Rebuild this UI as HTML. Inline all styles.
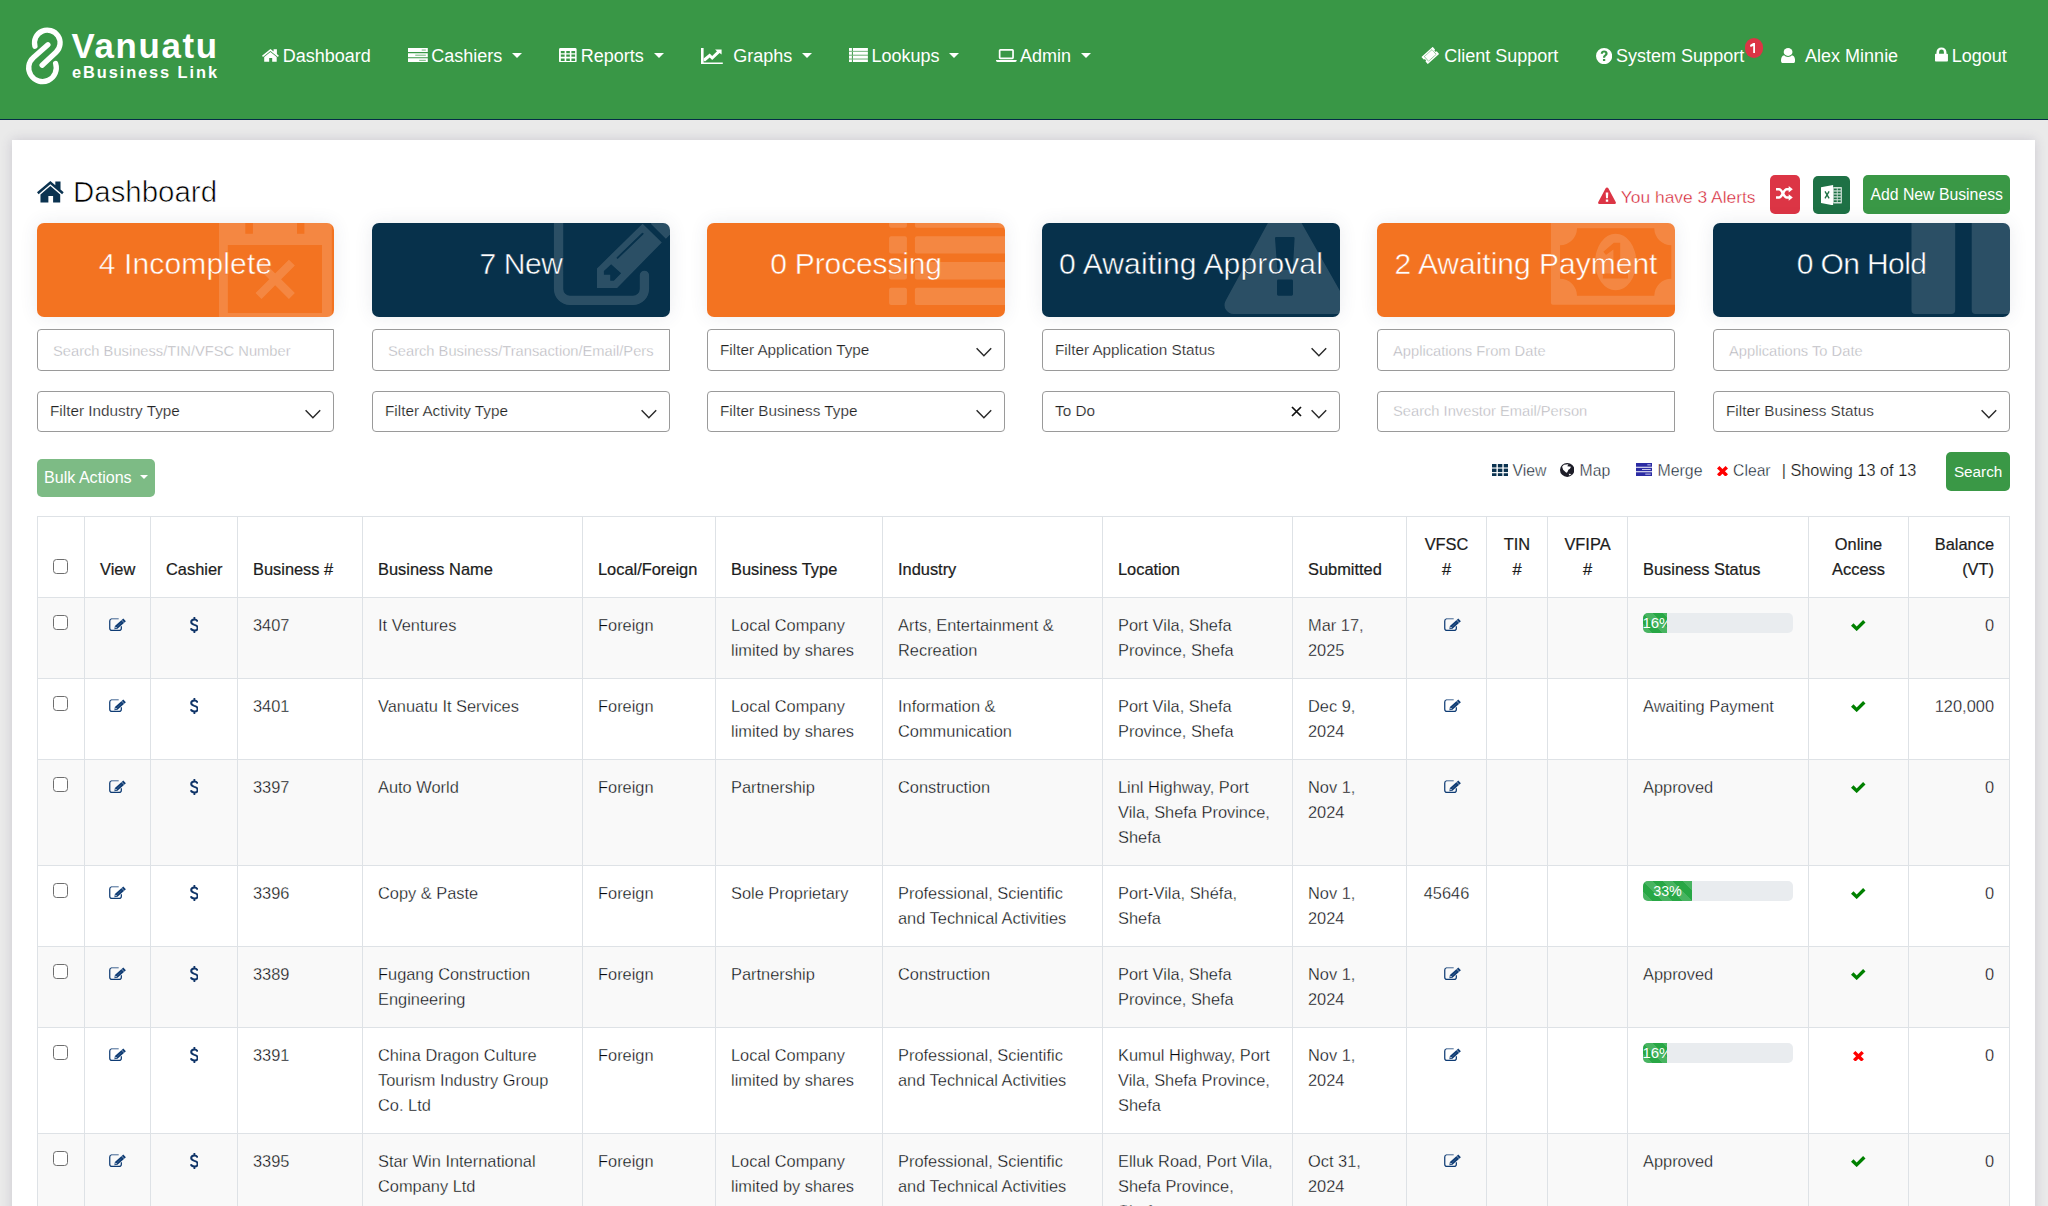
<!DOCTYPE html>
<html>
<head>
<meta charset="utf-8">
<title>Dashboard</title>
<style>
*{box-sizing:border-box;}
html,body{margin:0;padding:0;}
body{width:2048px;height:1206px;overflow:hidden;background:#eaeaea;font-family:"Liberation Sans",sans-serif;font-size:16.4px;line-height:25px;color:#333;position:relative;}
.abs{position:absolute;}
#nav{position:absolute;left:0;top:0;width:2048px;height:120px;background:#399746;border-bottom:1px solid #062c47;}
#nav .it{position:absolute;top:44.2px;height:25px;line-height:25px;font-size:18px;color:#fff;white-space:nowrap;}
.caret{position:absolute;width:0;height:0;border-left:5px solid transparent;border-right:5px solid transparent;border-top:5.2px solid #fff;top:52.9px;}
#main{position:absolute;left:12px;top:140px;width:2023px;height:1100px;background:#fff;box-shadow:0 0 11px rgba(70,60,100,.19);}
h1{position:absolute;left:73px;top:172px;margin:0;font-weight:normal;font-size:29.45px;line-height:40px;color:#000;white-space:nowrap;-webkit-text-stroke:0.65px #fff;}
.card{position:absolute;top:223px;width:298px;height:94px;border-radius:7px;overflow:hidden;box-shadow:0 0 18px rgba(60,70,100,.10);color:#fff;font-size:30px;line-height:94px;text-align:center;white-space:nowrap;}
.card span{position:absolute;left:0;top:-6px;width:100%;text-align:center;}
.or{background:#f37321;-webkit-text-stroke:0.48px #f37321;}
.nv{background:#07314b;-webkit-text-stroke:0.48px #07314b;}
.inp{position:absolute;width:298px;height:41px;border:1px solid #9a9a9a;border-radius:4px;background:#fff;font-size:14.7px;line-height:39px;padding-left:15px;color:#b4b4ba;-webkit-text-stroke:.35px #fff;white-space:nowrap;overflow:hidden;}
.sel{-webkit-text-stroke:.22px #fff;color:#222;padding-left:12px;font-size:15.3px;}
.chev{position:absolute;right:12px;top:16.5px;width:16px;height:10px;}
.btn{position:absolute;border-radius:5px;color:#fff;text-align:center;white-space:nowrap;}
.tl{position:absolute;top:458px;font-size:16.5px;line-height:25px;color:#333;white-space:nowrap;}
table{position:absolute;left:37px;top:516px;width:1972px;border-collapse:collapse;table-layout:fixed;}
td,th{border:1px solid #dee2e6;padding:15px;vertical-align:top;text-align:left;font-weight:normal;white-space:nowrap;overflow:hidden;}
th{vertical-align:bottom;color:#1c1c1c;-webkit-text-stroke:.22px #1c1c1c;}
td{color:#05080b;-webkit-text-stroke:0.32px #fff;}
tr.s td{-webkit-text-stroke-color:#f9f9f9;}
tr.s td{background:#f9f9f9;}
th.c,td.c{text-align:center;}
th.r,td.r{text-align:right;}
.dl{font-weight:bold;color:#0f3468;font-size:18.4px;}
.dl span{display:inline-block;transform:scale(.84,1);position:relative;top:-2px;}
.cb{display:block;width:15px;height:15px;border:1.4px solid #6e6e6e;border-radius:3.5px;background:#fff;margin:2px 0 0 0;}
th .cb{margin:0 0 8px 0;}
.prog{width:150px;height:20px;background:#e9ecef;border-radius:5px;overflow:hidden;margin-top:0;}
.prog div{-webkit-text-stroke:0;height:20px;background-color:#28a745;background-image:linear-gradient(45deg,rgba(255,255,255,.15) 25%,transparent 25%,transparent 50%,rgba(255,255,255,.15) 50%,rgba(255,255,255,.15) 75%,transparent 75%,transparent);background-size:20px 20px;color:#fff;font-size:14px;line-height:20px;text-align:center;overflow:hidden;}
td svg{display:inline-block;vertical-align:top;}
td.vf svg{margin-left:12px !important;}
</style>
</head>
<body>
<div id="nav">
<svg class="abs" style="left:20px;top:20px" width="210" height="75" viewBox="20 20 210 75"><g fill="none" stroke="#fff" stroke-width="5.3" stroke-linecap="round"><path d="M34.93 46.25 A12.8 12.8 0 1 1 56.02 52.30 L42.1 65.3"/><path d="M55.62 63.54 A13.8 13.8 0 1 1 33.45 57.38 L47.9 44.7"/></g><text x="71.5" y="58" font-family="Liberation Sans, sans-serif" font-weight="bold" font-size="34.8" fill="#fff" textLength="145.5" lengthAdjust="spacing">Vanuatu</text><text x="72" y="77.6" font-family="Liberation Sans, sans-serif" font-weight="bold" font-size="16.4" fill="#fff" textLength="145" lengthAdjust="spacing">eBusiness Link</text></svg>
<svg class="abs" style="left:262px;top:49.2px" width="16.9" height="12.8" viewBox="0 0 16.9 12.8" fill="#fff" preserveAspectRatio="none" ><path d="M8.45 0 L0 6.7 L1.0 7.9 L8.45 1.9 L15.9 7.9 L16.9 6.7 L14.9 5.1 V0.3 H11.6 V2.5 Z"/><path d="M8.45 3.0 L2.2 8.0 V12.8 H7.2 V9 H10.2 V12.8 H14.7 V8.0 Z"/></svg><div class="it" style="left:282.7px">Dashboard</div>
<svg class="abs" style="left:408.2px;top:47.6px" width="19.8" height="14.4" viewBox="0 0 26 20" fill="#fff" preserveAspectRatio="none" ><path d="M0 0H26V5.7H0Z M0 7.15H26V12.85H0Z M0 14.3H26V20H0Z"/><g fill="#7dbd86"><rect x="18" y="2.1" width="5.4" height="1.5"/><rect x="9.5" y="9.25" width="13.9" height="1.5"/><rect x="14.7" y="16.4" width="8.7" height="1.5"/></g></svg><div class="it" style="left:431.2px">Cashiers</div><div class="caret" style="left:511.9px"></div>
<svg class="abs" style="left:559.3px;top:47.6px" width="17.6" height="14.4" viewBox="0 0 24 20" fill="#fff" preserveAspectRatio="none" ><path fill-rule="evenodd" d="M2 0H22A2 2 0 0 1 24 2V18A2 2 0 0 1 22 20H2A2 2 0 0 1 0 18V2A2 2 0 0 1 2 0Z M2.5 4.3V7.4H7.7V4.3Z M9.9 4.3V7.4H14.8V4.3Z M16.9 4.3V7.4H22V4.3Z M2.5 9.1V12.2H7.7V9.1Z M9.9 9.1V12.2H14.8V9.1Z M16.9 9.1V12.2H22V9.1Z M2.5 14.5V17.9H7.7V14.5Z M9.9 14.5V17.9H14.8V14.5Z M16.9 14.5V17.9H22V14.5Z"/></svg><div class="it" style="left:580.7px">Reports</div><div class="caret" style="left:653.9px"></div>
<svg class="abs" style="left:701.1px;top:47.5px" width="21.8" height="16.1" viewBox="0 0 21.8 16.1" fill="#fff" preserveAspectRatio="none" ><path d="M0 0H2.6V14.4H21.8V16.1H0Z"/><path d="M2.6 10.4 L8.7 5.4 L11.2 7.9 L16.0 3.3 L14.05 1.6 H20.6 V6.6 L18.6 4.9 L11.2 12.1 L8.7 9.5 L4.0 13.6 L2.6 12.4 Z"/></svg><div class="it" style="left:733.2px">Graphs</div><div class="caret" style="left:801.9px"></div>
<svg class="abs" style="left:849.1px;top:47.6px" width="18.9" height="14.4" viewBox="0 0 18.9 14.4" fill="#fff" preserveAspectRatio="none" ><rect x="0" y="0" width="2.9" height="2.9"/><rect x="3.9" y="0" width="15" height="2.9"/><rect x="0" y="2.9" width="18.9" height="0.95" opacity=".35"/><rect x="0" y="3.85" width="2.9" height="2.9"/><rect x="3.9" y="3.85" width="15" height="2.9"/><rect x="0" y="6.75" width="18.9" height="0.95" opacity=".35"/><rect x="0" y="7.7" width="2.9" height="2.9"/><rect x="3.9" y="7.7" width="15" height="2.9"/><rect x="0" y="10.6" width="18.9" height="0.95" opacity=".35"/><rect x="0" y="11.5" width="2.9" height="2.9"/><rect x="3.9" y="11.5" width="15" height="2.9"/><rect x="0" y="14.4" width="18.9" height="0.95" opacity=".35"/></svg><div class="it" style="left:871.4px">Lookups</div><div class="caret" style="left:949.2px"></div>
<svg class="abs" style="left:996.3px;top:49px" width="20.7" height="13" viewBox="0 0 20.7 13" fill="#fff" preserveAspectRatio="none" ><path fill-rule="evenodd" d="M4.4 0H16.3A1.6 1.6 0 0 1 17.9 1.6V8.6A1.6 1.6 0 0 1 16.3 10.2H4.4A1.6 1.6 0 0 1 2.8 8.6V1.6A1.6 1.6 0 0 1 4.4 0Z M4.5 1.7V8.5H16.2V1.7Z"/><path d="M0 11H20.7V11.6A1.4 1.4 0 0 1 19.3 13H1.4A1.4 1.4 0 0 1 0 11.6Z"/></svg><div class="it" style="left:1020px">Admin</div><div class="caret" style="left:1081px"></div>
<svg class="abs" style="left:1421.1px;top:47.1px" width="18.5" height="16.9" viewBox="0 0 18.5 16.9" fill="#fff" preserveAspectRatio="none" ><g transform="rotate(-42 9.25 8.45)"><path d="M1.65 3.7H16.85V7.15A1.3 1.3 0 0 0 16.85 9.75V13.2H1.65V9.75A1.3 1.3 0 0 0 1.65 7.15Z"/><rect x="4.1" y="5.3" width="10.3" height="6.3" fill="none" stroke="#3a9846" stroke-width=".7" stroke-dasharray="1 .5"/></g></svg><div class="it" style="left:1444.2px">Client Support</div>
<svg class="abs" style="left:1595.8px;top:47.9px" width="16.2" height="16.2" viewBox="0 0 24 24" fill="#fff" preserveAspectRatio="none" ><path fill-rule="evenodd" d="M12 0A12 12 0 1 1 12 24A12 12 0 1 1 12 0Z M10.3 16.2V19.2H13.7V16.2Z M7 8.6H10.2C10.2 7.4 11 6.7 12 6.7C13.1 6.7 13.8 7.3 13.8 8.2C13.8 9.1 13.3 9.6 12.4 10.3C11 11.3 10.4 12.3 10.4 14V14.6H13.6V14.2C13.6 13.2 14 12.7 15 12C16.4 11 17.2 9.9 17.2 8.1C17.2 5.5 15.1 3.8 12.1 3.8C9 3.8 7.1 5.6 7 8.6Z"/></svg><div class="it" style="left:1616.1px">System Support</div>
<svg class="abs" style="left:1781.3px;top:47.7px" width="14.1" height="15.7" viewBox="0 0 14.1 15.8" fill="#fff" preserveAspectRatio="none" ><ellipse cx="7.1" cy="4.0" rx="4.4" ry="4.0"/><path d="M3.2 7.4 C1 7.8 0 10 0 12.8 C0 14.6 1.2 15.8 2.8 15.8 H11.3 C12.9 15.8 14.1 14.6 14.1 12.8 C14.1 10 13.1 7.8 10.9 7.4 C10 8.4 8.6 9 7.05 9 C5.5 9 4.1 8.4 3.2 7.4Z"/></svg><div class="it" style="left:1805.1px">Alex Minnie</div>
<svg class="abs" style="left:1935.1px;top:47.4px" width="12.95" height="14.5" viewBox="0 0 12.95 14.5" fill="#fff" preserveAspectRatio="none" ><path fill-rule="evenodd" d="M1.5 6.8 V5 A5 5 0 0 1 11.45 5 V6.8 H12.15 A0.8 0.8 0 0 1 12.95 7.6 V13.7 A0.8 0.8 0 0 1 12.15 14.5 H0.8 A0.8 0.8 0 0 1 0 13.7 V7.6 A0.8 0.8 0 0 1 0.8 6.8 Z M4.1 6.8 H8.9 V5 A2.4 2.4 0 0 0 4.1 5 Z"/></svg><div class="it" style="left:1951.8px">Logout</div>
<div class="abs" style="left:1745px;top:37.8px;width:18.2px;height:20.1px;border-radius:10px;background:#dc3545;"></div><svg class="abs" style="left:1750px;top:43.1px" width="5.4" height="9.9" viewBox="0 0 5.4 9.9"><path d="M3.2 0H5.4V9.9H3.2V2.9L0.5 3.9L0 2.1Z" fill="#fff"/></svg>
</div>
<div id="main"></div>
<svg class="abs" style="left:37.1px;top:181.2px" width="26.7" height="21.5" viewBox="0 0 16.9 12.8" fill="#0b3350" preserveAspectRatio="none" ><path d="M8.45 0 L0 6.7 L1.0 7.9 L8.45 1.9 L15.9 7.9 L16.9 6.7 L14.9 5.1 V0.3 H11.6 V2.5 Z"/><path d="M8.45 3.0 L2.2 8.0 V12.8 H7.2 V9 H10.2 V12.8 H14.7 V8.0 Z"/></svg><h1>Dashboard</h1>
<svg class="abs" style="left:1598px;top:186.9px" width="18" height="17.1" viewBox="0 0 24 22" fill="#dc3545" preserveAspectRatio="none" ><path fill-rule="evenodd" d="M12 0.5C12.8 0.5 13.4 0.9 13.8 1.6L23.6 19.4C24.4 20.8 23.5 22 22 22H2C0.5 22-0.4 20.8 0.4 19.4L10.2 1.6C10.6 0.9 11.2 0.5 12 0.5Z M10.3 7.2L10.7 14.4H13.3L13.7 7.2Z M10.4 16V19H13.6V16Z"/></svg><div class="abs" style="left:1620.80px;top:184.70px;font-size:17.4px;line-height:24px;color:#d3182d;white-space:nowrap;-webkit-text-stroke:.38px #fff;">You have 3 Alerts</div><div class="btn" style="left:1770px;top:175px;width:30px;height:39px;background:#dc3545;"></div><svg class="abs" style="left:1776.4px;top:186.3px" width="16.8" height="14.7" viewBox="0 0 16.8 14.7"><g fill="none" stroke="#fff" stroke-width="2.5"><path d="M0 3.25H3C6.6 3.25 7.2 11.5 10.8 11.5H13.4"/><path d="M0 11.5H3C6.6 11.5 7.2 3.25 10.8 3.25H13.4"/></g><path d="M12.7 0L16.8 3.25L12.7 6.5Z M12.7 8.2L16.8 11.45L12.7 14.7Z" fill="#fff"/></svg><div class="btn" style="left:1813px;top:176px;width:37px;height:38px;background:#1e7145;"></div><svg class="abs" style="left:1821px;top:184.8px" width="21" height="20.3" viewBox="0 0 21 20.3"><path d="M0 2.2L12.1 0V20.3L0 18.1Z" fill="#fff"/><path d="M4 6.3L8.1 13.3M8.1 6.3L4 13.3" stroke="#1e7145" stroke-width="1.35" fill="none"/><rect x="12.1" y="2" width="8.8" height="16.4" rx=".6" fill="#fff" opacity=".78"/><g fill="#1e7145"><rect x="12.8" y="3.6" width="3" height="1.7"/><rect x="12.8" y="6.6" width="3" height="1.7"/><rect x="12.8" y="9.55" width="3" height="1.7"/><rect x="12.8" y="12.5" width="3" height="1.7"/><rect x="12.8" y="15.3" width="3" height="1.7"/><rect x="16.7" y="3.6" width="3" height="1.7"/><rect x="16.7" y="6.6" width="3" height="1.7"/><rect x="16.7" y="9.55" width="3" height="1.7"/><rect x="16.7" y="12.5" width="3" height="1.7"/><rect x="16.7" y="15.3" width="3" height="1.7"/></g></svg><div class="btn" style="left:1863px;top:175px;width:147px;height:39px;background:#3a9846;"></div><div class="abs" style="left:1870.40px;top:182.50px;font-size:15.8px;line-height:24px;color:#fff;white-space:nowrap;">Add New Business</div>
<div class="card or" style="left:37px;width:297px"><svg class="abs" style="left:0;top:0" width="297" height="94" viewBox="0 0 297 94"><g fill="#fff" opacity=".15"><path fill-rule="evenodd" d="M182 -10H294.8V110H182Z M190.8 21.9V90H285V21.9Z M208.3 -10V10.7H215.9V-10Z M260 -10V10.7H267.4V-10Z"/><g stroke="#fff" stroke-width="8.4" stroke-linecap="square" stroke-linejoin="round" fill="none"><path d="M224.5 42.6L251.9 70M251.9 42.6L224.5 70"/></g></g></svg><span style="letter-spacing:0.14px">4 Incomplete</span></div>
<div class="card nv" style="left:372px;width:298px"><svg class="abs" style="left:0;top:0" width="298" height="94" viewBox="0 0 298 94"><mask id="m1"><rect x="0" y="-20" width="320" height="140" fill="#fff"/><path d="M239.14 41.25L249.18 50.37L241.88 57.67H238.23V51.74H231.85V48.09Z" fill="#000"/><path d="M245.53 34.87L270.6 10.7" stroke="#000" stroke-width="1.9" stroke-linecap="round"/></mask><g fill="#fff" opacity=".15" mask="url(#m1)"><path d="M186.56 -10V65.9A11.4 11.4 0 0 0 197.96 77.28H261.03A11.4 11.4 0 0 0 272.43 65.9V52.3" fill="none" stroke="#fff" stroke-width="9.3" stroke-linecap="round"/><path d="M225 65V45.4L270.6 0.7L289.8 19.4L245.1 65Z"/><path d="M278.8 0.7L293.9 15.7L304 5.6L288.9 -9.4Z"/></g></svg><span style="letter-spacing:-0.37px">7 New</span></div>
<div class="card or" style="left:707px;width:298px"><svg class="abs" style="left:0;top:0" width="298" height="94" viewBox="0 0 298 94"><g fill="#fff" opacity=".15"><rect x="182.1" y="-12.6" width="17.8" height="17.4" rx="2"/><rect x="207.9" y="-12.6" width="110" height="17.4" rx="2"/><rect x="182.1" y="13.2" width="17.8" height="17.4" rx="2"/><rect x="207.9" y="13.2" width="110" height="17.4" rx="2"/><rect x="182.1" y="39.0" width="17.8" height="17.4" rx="2"/><rect x="207.9" y="39.0" width="110" height="17.4" rx="2"/><rect x="182.1" y="64.7" width="17.8" height="17.4" rx="2"/><rect x="207.9" y="64.7" width="110" height="17.4" rx="2"/></g></svg><span style="letter-spacing:-0.14px">0 Processing</span></div>
<div class="card nv" style="left:1042px;width:298px"><svg class="abs" style="left:0;top:0" width="298" height="94" viewBox="0 0 298 94"><g fill="#fff" opacity=".15"><path fill-rule="evenodd" d="M242.4 -30.3 L311 91 H191.54 A9 9 0 0 1 183.63 77.7 Z M234.2 13.9H251.4A1.2 1.2 0 0 1 252.6 15.2L250.9 45.5A1.3 1.3 0 0 1 249.6 46.7H236.5A1.3 1.3 0 0 1 235.2 45.5L233 15.2A1.2 1.2 0 0 1 234.2 13.9Z M236.4 56.6H249.6A1.4 1.4 0 0 1 251 58V71.3A1.4 1.4 0 0 1 249.6 72.7H236.4A1.4 1.4 0 0 1 235 71.3V58A1.4 1.4 0 0 1 236.4 56.6Z"/></g></svg><span style="letter-spacing:0.14px">0 Awaiting Approval</span></div>
<div class="card or" style="left:1377px;width:298px"><svg class="abs" style="left:0;top:0" width="298" height="94" viewBox="0 0 298 94"><g fill="#fff" opacity=".15"><path fill-rule="evenodd" d="M173.9 -10H320V81.8H175.9A2 2 0 0 1 173.9 79.8Z M200 5.2 A17 17 0 0 1 183 22.2 V55.7 A17 17 0 0 1 200 72.7 H277.3 A17 17 0 0 1 294.3 55.7 V22.2 A17 17 0 0 1 277.3 5.2 Z M238.7 10.7 A20.6 28.3 0 1 1 238.7 67.3 A20.6 28.3 0 1 1 238.7 10.7 Z M243.2 19.8H236.8L226.3 28.8L229 32L236.4 26.4V50.4H225.9V55.4H251V50.4H243.2Z"/></g></svg><span style="letter-spacing:0px">2 Awaiting Payment</span></div>
<div class="card nv" style="left:1713px;width:297px"><svg class="abs" style="left:0;top:0" width="297" height="94" viewBox="0 0 297 94"><g fill="#fff" opacity=".15"><path d="M198.5 -10H242.2V87A4 4 0 0 1 238.2 91H202.5A4 4 0 0 1 198.5 87Z M258.7 -10H320V91H262.7A4 4 0 0 1 258.7 87Z"/></g></svg><span style="letter-spacing:-0.6px">0 On Hold</span></div>
<div class="inp" style="left:37px;top:329px;width:297px;height:42px;line-height:42px;border-radius:4px 0 0 4px">Search Business/TIN/VFSC Number</div>
<div class="inp" style="left:372px;top:329px;width:298px;height:42px;line-height:42px;border-radius:4px 0 0 4px">Search Business/Transaction/Email/Pers</div>
<div class="inp sel" style="left:707px;top:329px;width:298px;height:42px;line-height:40px">Filter Application Type<svg class="chev" viewBox="0 0 16 10"><path d="M0.6 1.2L7.9 8.7L15.2 1.2" fill="none" stroke="#2a2a2a" stroke-width="1.45"/></svg></div>
<div class="inp sel" style="left:1042px;top:329px;width:298px;height:42px;line-height:40px">Filter Application Status<svg class="chev" viewBox="0 0 16 10"><path d="M0.6 1.2L7.9 8.7L15.2 1.2" fill="none" stroke="#2a2a2a" stroke-width="1.45"/></svg></div>
<div class="inp" style="left:1377px;top:329px;width:298px;height:42px;line-height:42px">Applications From Date</div>
<div class="inp" style="left:1713px;top:329px;width:297px;height:42px;line-height:42px">Applications To Date</div>
<div class="inp sel" style="left:37px;top:391px;width:297px;height:41px;line-height:37px">Filter Industry Type<svg class="chev" viewBox="0 0 16 10"><path d="M0.6 1.2L7.9 8.7L15.2 1.2" fill="none" stroke="#2a2a2a" stroke-width="1.45"/></svg></div>
<div class="inp sel" style="left:372px;top:391px;width:298px;height:41px;line-height:37px">Filter Activity Type<svg class="chev" viewBox="0 0 16 10"><path d="M0.6 1.2L7.9 8.7L15.2 1.2" fill="none" stroke="#2a2a2a" stroke-width="1.45"/></svg></div>
<div class="inp sel" style="left:707px;top:391px;width:298px;height:41px;line-height:37px">Filter Business Type<svg class="chev" viewBox="0 0 16 10"><path d="M0.6 1.2L7.9 8.7L15.2 1.2" fill="none" stroke="#2a2a2a" stroke-width="1.45"/></svg></div>
<div class="inp sel" style="left:1042px;top:391px;width:298px;height:41px;line-height:37px">To Do<svg class="chev" viewBox="0 0 16 10"><path d="M0.6 1.2L7.9 8.7L15.2 1.2" fill="none" stroke="#2a2a2a" stroke-width="1.45"/></svg><svg class="abs" style="right:37.4px;top:14.4px" width="11" height="11" viewBox="0 0 11 11"><path d="M1 1L10 10M10 1L1 10" stroke="#111" stroke-width="1.75" fill="none"/></svg></div>
<div class="inp" style="left:1377px;top:391px;width:298px;height:41px;line-height:39px;border-radius:4px 0 0 4px">Search Investor Email/Person</div>
<div class="inp sel" style="left:1713px;top:391px;width:297px;height:41px;line-height:37px">Filter Business Status<svg class="chev" viewBox="0 0 16 10"><path d="M0.6 1.2L7.9 8.7L15.2 1.2" fill="none" stroke="#2a2a2a" stroke-width="1.45"/></svg></div>
<div class="btn" style="left:37px;top:459px;width:118px;height:38px;background:#7dbb85;font-size:16.1px;line-height:36px;text-align:left;padding-left:7px;">Bulk Actions<span class="caret" style="left:103px;top:16px;border-width:4.5px;border-top-color:#fff"></span></div>
<svg class="abs" style="left:1491.6px;top:463.5px" width="16.2" height="12.7" viewBox="0 0 22.4 18" fill="#0b3350" preserveAspectRatio="none" ><rect x="0" y="0" width="6.2" height="4.9"/><rect x="0" y="6.55" width="6.2" height="4.9"/><rect x="0" y="13.1" width="6.2" height="4.9"/><rect x="8.1" y="0" width="6.2" height="4.9"/><rect x="8.1" y="6.55" width="6.2" height="4.9"/><rect x="8.1" y="13.1" width="6.2" height="4.9"/><rect x="16.2" y="0" width="6.2" height="4.9"/><rect x="16.2" y="6.55" width="6.2" height="4.9"/><rect x="16.2" y="13.1" width="6.2" height="4.9"/></svg><div class="abs" style="left:1512.50px;top:458.50px;font-size:15.8px;line-height:24px;color:#0a1828;white-space:nowrap;-webkit-text-stroke:.35px #fff;">View</div><svg class="abs" style="left:1559.7px;top:463.2px" width="14.4" height="13.9" viewBox="0 0 24 24" fill="#1d1d28" preserveAspectRatio="none" ><path fill-rule="evenodd" d="M12 0A12 12 0 1 1 12 24A12 12 0 1 1 12 0Z M6.5 3L14 2.1L12.2 5.6L18.3 6.4L16.6 9.9L14 11.6L12.2 15.9L10.5 16.7L5.2 11.6L3.5 6.4Z M14.4 18.4L19.2 18.9L15.7 21.4Z"/></svg><div class="abs" style="left:1579.50px;top:458.50px;font-size:15.8px;line-height:24px;color:#0a1828;white-space:nowrap;-webkit-text-stroke:.35px #fff;">Map</div><svg class="abs" style="left:1635.9px;top:463.2px" width="16.4" height="13" viewBox="0 0 26 20" fill="#2b2ba3" preserveAspectRatio="none" ><path d="M0 0H26V5.7H0Z M0 7.15H26V12.85H0Z M0 14.3H26V20H0Z"/><g fill="#c9c9ee"><rect x="18" y="2.1" width="5.4" height="1.5"/><rect x="9.5" y="9.25" width="13.9" height="1.5"/><rect x="14.7" y="16.4" width="8.7" height="1.5"/></g></svg><div class="abs" style="left:1657.50px;top:458.50px;font-size:15.9px;line-height:24px;color:#0a1828;white-space:nowrap;-webkit-text-stroke:.35px #fff;">Merge</div><svg class="abs" style="left:1716.5px;top:465.5px" width="11" height="10.7" viewBox="0 0 18 18" fill="#ff0000" preserveAspectRatio="none" ><path d="M4 0L9 5L14 0L18 4L13 9L18 14L14 18L9 13L4 18L0 14L5 9L0 4Z" stroke-linejoin="round"/></svg><div class="abs" style="left:1733.10px;top:458.50px;font-size:15.7px;line-height:24px;color:#0a1828;white-space:nowrap;-webkit-text-stroke:.35px #fff;">Clear</div><div class="abs" style="left:1781.70px;top:458.00px;font-size:16.3px;line-height:24px;color:#1a1a1a;white-space:nowrap;-webkit-text-stroke:.2px #fff;">| Showing 13 of 13</div><div class="btn" style="left:1946px;top:452px;width:64px;height:39px;background:#3a9846;"></div><div class="abs" style="left:1953.90px;top:459.50px;font-size:15.3px;line-height:24px;color:#fff;white-space:nowrap;">Search</div>
<table><colgroup><col style="width:47px"><col style="width:66px"><col style="width:87px"><col style="width:125px"><col style="width:220px"><col style="width:133px"><col style="width:167px"><col style="width:220px"><col style="width:190px"><col style="width:114px"><col style="width:80px"><col style="width:61px"><col style="width:80px"><col style="width:181px"><col style="width:100px"><col style="width:101px"></colgroup>
<tr class="h"><th><span class="cb"></span></th><th>View</th><th>Cashier</th><th>Business #</th><th>Business Name</th><th>Local/Foreign</th><th>Business Type</th><th>Industry</th><th>Location</th><th>Submitted</th><th class="c">VFSC<br>#</th><th class="c">TIN<br>#</th><th class="c">VFIPA<br>#</th><th>Business Status</th><th class="c">Online<br>Access</th><th class="r">Balance<br>(VT)</th></tr>
<tr class="s"><td><span class="cb"></span></td><td class="c"><svg width="16.9" height="13.1" viewBox="0 0 16.9 13.1" fill="#0f3c74" preserveAspectRatio="none" style="margin-top:5px;color:#0f3c74;margin-left:.3px"><path d="M2.6 0.75A2.2 2.2 0 0 0 0.75 2.95V10.15A2.2 2.2 0 0 0 2.95 12.35H10.15A2.2 2.2 0 0 0 12.35 10.15V8.3" fill="none" stroke="currentColor" stroke-width="1.25"/><path d="M2.4 0.75H9.7" fill="none" stroke="currentColor" stroke-width="1.25" opacity=".62"/><path d="M5.4 11.2L5.9 7.95L14.3 0.45L16.9 3.35L8.5 10.85Z"/><path d="M12.6 1.95L15.2 4.85" stroke="#fff" stroke-width=".65" opacity=".8"/><path d="M8.3 8.4L12.6 4.55" stroke="#fff" stroke-width=".55" opacity=".5" stroke-dasharray=".8 .7"/><path d="M6.2 10.35L6.65 8.55L8.1 9.9Z" fill="#fff" opacity=".9"/></svg></td><td class="c"><svg width="8.8" height="16" viewBox="0 0 8.8 16" fill="none" preserveAspectRatio="none" style="margin-top:4px"><path d="M7.7 4.7C7.2 3.3 6 2.6 4.4 2.6C2.4 2.6 1.2 3.6 1.2 5.1C1.2 6.8 2.6 7.4 4.4 7.9C6.4 8.4 7.7 9.1 7.7 10.9C7.7 12.5 6.4 13.5 4.4 13.5C2.6 13.5 1.3 12.8 0.9 11.3" fill="none" stroke="#0f3468" stroke-width="2"/><path d="M4.4 0V2.8M4.4 13.2V16" stroke="#0f3468" stroke-width="1.8" fill="none"/></svg></td><td>3407</td><td>It Ventures</td><td>Foreign</td><td>Local Company<br>limited by shares</td><td>Arts, Entertainment &amp;<br>Recreation</td><td>Port Vila, Shefa<br>Province, Shefa</td><td>Mar 17,<br>2025</td><td class="c vf"><svg width="16.9" height="13.1" viewBox="0 0 16.9 13.1" fill="#0f3c74" preserveAspectRatio="none" style="margin-top:5px;color:#0f3c74;margin-left:.3px"><path d="M2.6 0.75A2.2 2.2 0 0 0 0.75 2.95V10.15A2.2 2.2 0 0 0 2.95 12.35H10.15A2.2 2.2 0 0 0 12.35 10.15V8.3" fill="none" stroke="currentColor" stroke-width="1.25"/><path d="M2.4 0.75H9.7" fill="none" stroke="currentColor" stroke-width="1.25" opacity=".62"/><path d="M5.4 11.2L5.9 7.95L14.3 0.45L16.9 3.35L8.5 10.85Z"/><path d="M12.6 1.95L15.2 4.85" stroke="#fff" stroke-width=".65" opacity=".8"/><path d="M8.3 8.4L12.6 4.55" stroke="#fff" stroke-width=".55" opacity=".5" stroke-dasharray=".8 .7"/><path d="M6.2 10.35L6.65 8.55L8.1 9.9Z" fill="#fff" opacity=".9"/></svg></td><td></td><td></td><td><div class="prog"><div style="width:24px;font-size:15px;text-align:left;text-indent:-.6px">16%</div></div></td><td class="c"><svg width="14.5" height="11.1" viewBox="0 0 14.5 11.1" fill="#008000" preserveAspectRatio="none" style="margin-top:6.9px"><path d="M0 5.7L2.5 3.3L5.7 6.4L12.1 0L14.5 2.4L5.7 11.1Z"/></svg></td><td class="r">0</td></tr>
<tr><td><span class="cb"></span></td><td class="c"><svg width="16.9" height="13.1" viewBox="0 0 16.9 13.1" fill="#0f3c74" preserveAspectRatio="none" style="margin-top:5px;color:#0f3c74;margin-left:.3px"><path d="M2.6 0.75A2.2 2.2 0 0 0 0.75 2.95V10.15A2.2 2.2 0 0 0 2.95 12.35H10.15A2.2 2.2 0 0 0 12.35 10.15V8.3" fill="none" stroke="currentColor" stroke-width="1.25"/><path d="M2.4 0.75H9.7" fill="none" stroke="currentColor" stroke-width="1.25" opacity=".62"/><path d="M5.4 11.2L5.9 7.95L14.3 0.45L16.9 3.35L8.5 10.85Z"/><path d="M12.6 1.95L15.2 4.85" stroke="#fff" stroke-width=".65" opacity=".8"/><path d="M8.3 8.4L12.6 4.55" stroke="#fff" stroke-width=".55" opacity=".5" stroke-dasharray=".8 .7"/><path d="M6.2 10.35L6.65 8.55L8.1 9.9Z" fill="#fff" opacity=".9"/></svg></td><td class="c"><svg width="8.8" height="16" viewBox="0 0 8.8 16" fill="none" preserveAspectRatio="none" style="margin-top:4px"><path d="M7.7 4.7C7.2 3.3 6 2.6 4.4 2.6C2.4 2.6 1.2 3.6 1.2 5.1C1.2 6.8 2.6 7.4 4.4 7.9C6.4 8.4 7.7 9.1 7.7 10.9C7.7 12.5 6.4 13.5 4.4 13.5C2.6 13.5 1.3 12.8 0.9 11.3" fill="none" stroke="#0f3468" stroke-width="2"/><path d="M4.4 0V2.8M4.4 13.2V16" stroke="#0f3468" stroke-width="1.8" fill="none"/></svg></td><td>3401</td><td>Vanuatu It Services</td><td>Foreign</td><td>Local Company<br>limited by shares</td><td>Information &amp;<br>Communication</td><td>Port Vila, Shefa<br>Province, Shefa</td><td>Dec 9,<br>2024</td><td class="c vf"><svg width="16.9" height="13.1" viewBox="0 0 16.9 13.1" fill="#0f3c74" preserveAspectRatio="none" style="margin-top:5px;color:#0f3c74;margin-left:.3px"><path d="M2.6 0.75A2.2 2.2 0 0 0 0.75 2.95V10.15A2.2 2.2 0 0 0 2.95 12.35H10.15A2.2 2.2 0 0 0 12.35 10.15V8.3" fill="none" stroke="currentColor" stroke-width="1.25"/><path d="M2.4 0.75H9.7" fill="none" stroke="currentColor" stroke-width="1.25" opacity=".62"/><path d="M5.4 11.2L5.9 7.95L14.3 0.45L16.9 3.35L8.5 10.85Z"/><path d="M12.6 1.95L15.2 4.85" stroke="#fff" stroke-width=".65" opacity=".8"/><path d="M8.3 8.4L12.6 4.55" stroke="#fff" stroke-width=".55" opacity=".5" stroke-dasharray=".8 .7"/><path d="M6.2 10.35L6.65 8.55L8.1 9.9Z" fill="#fff" opacity=".9"/></svg></td><td></td><td></td><td>Awaiting Payment</td><td class="c"><svg width="14.5" height="11.1" viewBox="0 0 14.5 11.1" fill="#008000" preserveAspectRatio="none" style="margin-top:6.9px"><path d="M0 5.7L2.5 3.3L5.7 6.4L12.1 0L14.5 2.4L5.7 11.1Z"/></svg></td><td class="r">120,000</td></tr>
<tr class="s"><td><span class="cb"></span></td><td class="c"><svg width="16.9" height="13.1" viewBox="0 0 16.9 13.1" fill="#0f3c74" preserveAspectRatio="none" style="margin-top:5px;color:#0f3c74;margin-left:.3px"><path d="M2.6 0.75A2.2 2.2 0 0 0 0.75 2.95V10.15A2.2 2.2 0 0 0 2.95 12.35H10.15A2.2 2.2 0 0 0 12.35 10.15V8.3" fill="none" stroke="currentColor" stroke-width="1.25"/><path d="M2.4 0.75H9.7" fill="none" stroke="currentColor" stroke-width="1.25" opacity=".62"/><path d="M5.4 11.2L5.9 7.95L14.3 0.45L16.9 3.35L8.5 10.85Z"/><path d="M12.6 1.95L15.2 4.85" stroke="#fff" stroke-width=".65" opacity=".8"/><path d="M8.3 8.4L12.6 4.55" stroke="#fff" stroke-width=".55" opacity=".5" stroke-dasharray=".8 .7"/><path d="M6.2 10.35L6.65 8.55L8.1 9.9Z" fill="#fff" opacity=".9"/></svg></td><td class="c"><svg width="8.8" height="16" viewBox="0 0 8.8 16" fill="none" preserveAspectRatio="none" style="margin-top:4px"><path d="M7.7 4.7C7.2 3.3 6 2.6 4.4 2.6C2.4 2.6 1.2 3.6 1.2 5.1C1.2 6.8 2.6 7.4 4.4 7.9C6.4 8.4 7.7 9.1 7.7 10.9C7.7 12.5 6.4 13.5 4.4 13.5C2.6 13.5 1.3 12.8 0.9 11.3" fill="none" stroke="#0f3468" stroke-width="2"/><path d="M4.4 0V2.8M4.4 13.2V16" stroke="#0f3468" stroke-width="1.8" fill="none"/></svg></td><td>3397</td><td>Auto World</td><td>Foreign</td><td>Partnership</td><td>Construction</td><td>Linl Highway, Port<br>Vila, Shefa Province,<br>Shefa</td><td>Nov 1,<br>2024</td><td class="c vf"><svg width="16.9" height="13.1" viewBox="0 0 16.9 13.1" fill="#0f3c74" preserveAspectRatio="none" style="margin-top:5px;color:#0f3c74;margin-left:.3px"><path d="M2.6 0.75A2.2 2.2 0 0 0 0.75 2.95V10.15A2.2 2.2 0 0 0 2.95 12.35H10.15A2.2 2.2 0 0 0 12.35 10.15V8.3" fill="none" stroke="currentColor" stroke-width="1.25"/><path d="M2.4 0.75H9.7" fill="none" stroke="currentColor" stroke-width="1.25" opacity=".62"/><path d="M5.4 11.2L5.9 7.95L14.3 0.45L16.9 3.35L8.5 10.85Z"/><path d="M12.6 1.95L15.2 4.85" stroke="#fff" stroke-width=".65" opacity=".8"/><path d="M8.3 8.4L12.6 4.55" stroke="#fff" stroke-width=".55" opacity=".5" stroke-dasharray=".8 .7"/><path d="M6.2 10.35L6.65 8.55L8.1 9.9Z" fill="#fff" opacity=".9"/></svg></td><td></td><td></td><td>Approved</td><td class="c"><svg width="14.5" height="11.1" viewBox="0 0 14.5 11.1" fill="#008000" preserveAspectRatio="none" style="margin-top:6.9px"><path d="M0 5.7L2.5 3.3L5.7 6.4L12.1 0L14.5 2.4L5.7 11.1Z"/></svg></td><td class="r">0</td></tr>
<tr><td><span class="cb"></span></td><td class="c"><svg width="16.9" height="13.1" viewBox="0 0 16.9 13.1" fill="#0f3c74" preserveAspectRatio="none" style="margin-top:5px;color:#0f3c74;margin-left:.3px"><path d="M2.6 0.75A2.2 2.2 0 0 0 0.75 2.95V10.15A2.2 2.2 0 0 0 2.95 12.35H10.15A2.2 2.2 0 0 0 12.35 10.15V8.3" fill="none" stroke="currentColor" stroke-width="1.25"/><path d="M2.4 0.75H9.7" fill="none" stroke="currentColor" stroke-width="1.25" opacity=".62"/><path d="M5.4 11.2L5.9 7.95L14.3 0.45L16.9 3.35L8.5 10.85Z"/><path d="M12.6 1.95L15.2 4.85" stroke="#fff" stroke-width=".65" opacity=".8"/><path d="M8.3 8.4L12.6 4.55" stroke="#fff" stroke-width=".55" opacity=".5" stroke-dasharray=".8 .7"/><path d="M6.2 10.35L6.65 8.55L8.1 9.9Z" fill="#fff" opacity=".9"/></svg></td><td class="c"><svg width="8.8" height="16" viewBox="0 0 8.8 16" fill="none" preserveAspectRatio="none" style="margin-top:4px"><path d="M7.7 4.7C7.2 3.3 6 2.6 4.4 2.6C2.4 2.6 1.2 3.6 1.2 5.1C1.2 6.8 2.6 7.4 4.4 7.9C6.4 8.4 7.7 9.1 7.7 10.9C7.7 12.5 6.4 13.5 4.4 13.5C2.6 13.5 1.3 12.8 0.9 11.3" fill="none" stroke="#0f3468" stroke-width="2"/><path d="M4.4 0V2.8M4.4 13.2V16" stroke="#0f3468" stroke-width="1.8" fill="none"/></svg></td><td>3396</td><td>Copy &amp; Paste</td><td>Foreign</td><td>Sole Proprietary</td><td>Professional, Scientific<br>and Technical Activities</td><td>Port-Vila, Shéfa,<br>Shefa</td><td>Nov 1,<br>2024</td><td class="c vf">45646</td><td></td><td></td><td><div class="prog"><div style="width:49px;font-size:14.3px">33%</div></div></td><td class="c"><svg width="14.5" height="11.1" viewBox="0 0 14.5 11.1" fill="#008000" preserveAspectRatio="none" style="margin-top:6.9px"><path d="M0 5.7L2.5 3.3L5.7 6.4L12.1 0L14.5 2.4L5.7 11.1Z"/></svg></td><td class="r">0</td></tr>
<tr class="s"><td><span class="cb"></span></td><td class="c"><svg width="16.9" height="13.1" viewBox="0 0 16.9 13.1" fill="#0f3c74" preserveAspectRatio="none" style="margin-top:5px;color:#0f3c74;margin-left:.3px"><path d="M2.6 0.75A2.2 2.2 0 0 0 0.75 2.95V10.15A2.2 2.2 0 0 0 2.95 12.35H10.15A2.2 2.2 0 0 0 12.35 10.15V8.3" fill="none" stroke="currentColor" stroke-width="1.25"/><path d="M2.4 0.75H9.7" fill="none" stroke="currentColor" stroke-width="1.25" opacity=".62"/><path d="M5.4 11.2L5.9 7.95L14.3 0.45L16.9 3.35L8.5 10.85Z"/><path d="M12.6 1.95L15.2 4.85" stroke="#fff" stroke-width=".65" opacity=".8"/><path d="M8.3 8.4L12.6 4.55" stroke="#fff" stroke-width=".55" opacity=".5" stroke-dasharray=".8 .7"/><path d="M6.2 10.35L6.65 8.55L8.1 9.9Z" fill="#fff" opacity=".9"/></svg></td><td class="c"><svg width="8.8" height="16" viewBox="0 0 8.8 16" fill="none" preserveAspectRatio="none" style="margin-top:4px"><path d="M7.7 4.7C7.2 3.3 6 2.6 4.4 2.6C2.4 2.6 1.2 3.6 1.2 5.1C1.2 6.8 2.6 7.4 4.4 7.9C6.4 8.4 7.7 9.1 7.7 10.9C7.7 12.5 6.4 13.5 4.4 13.5C2.6 13.5 1.3 12.8 0.9 11.3" fill="none" stroke="#0f3468" stroke-width="2"/><path d="M4.4 0V2.8M4.4 13.2V16" stroke="#0f3468" stroke-width="1.8" fill="none"/></svg></td><td>3389</td><td>Fugang Construction<br>Engineering</td><td>Foreign</td><td>Partnership</td><td>Construction</td><td>Port Vila, Shefa<br>Province, Shefa</td><td>Nov 1,<br>2024</td><td class="c vf"><svg width="16.9" height="13.1" viewBox="0 0 16.9 13.1" fill="#0f3c74" preserveAspectRatio="none" style="margin-top:5px;color:#0f3c74;margin-left:.3px"><path d="M2.6 0.75A2.2 2.2 0 0 0 0.75 2.95V10.15A2.2 2.2 0 0 0 2.95 12.35H10.15A2.2 2.2 0 0 0 12.35 10.15V8.3" fill="none" stroke="currentColor" stroke-width="1.25"/><path d="M2.4 0.75H9.7" fill="none" stroke="currentColor" stroke-width="1.25" opacity=".62"/><path d="M5.4 11.2L5.9 7.95L14.3 0.45L16.9 3.35L8.5 10.85Z"/><path d="M12.6 1.95L15.2 4.85" stroke="#fff" stroke-width=".65" opacity=".8"/><path d="M8.3 8.4L12.6 4.55" stroke="#fff" stroke-width=".55" opacity=".5" stroke-dasharray=".8 .7"/><path d="M6.2 10.35L6.65 8.55L8.1 9.9Z" fill="#fff" opacity=".9"/></svg></td><td></td><td></td><td>Approved</td><td class="c"><svg width="14.5" height="11.1" viewBox="0 0 14.5 11.1" fill="#008000" preserveAspectRatio="none" style="margin-top:6.9px"><path d="M0 5.7L2.5 3.3L5.7 6.4L12.1 0L14.5 2.4L5.7 11.1Z"/></svg></td><td class="r">0</td></tr>
<tr><td><span class="cb"></span></td><td class="c"><svg width="16.9" height="13.1" viewBox="0 0 16.9 13.1" fill="#0f3c74" preserveAspectRatio="none" style="margin-top:5px;color:#0f3c74;margin-left:.3px"><path d="M2.6 0.75A2.2 2.2 0 0 0 0.75 2.95V10.15A2.2 2.2 0 0 0 2.95 12.35H10.15A2.2 2.2 0 0 0 12.35 10.15V8.3" fill="none" stroke="currentColor" stroke-width="1.25"/><path d="M2.4 0.75H9.7" fill="none" stroke="currentColor" stroke-width="1.25" opacity=".62"/><path d="M5.4 11.2L5.9 7.95L14.3 0.45L16.9 3.35L8.5 10.85Z"/><path d="M12.6 1.95L15.2 4.85" stroke="#fff" stroke-width=".65" opacity=".8"/><path d="M8.3 8.4L12.6 4.55" stroke="#fff" stroke-width=".55" opacity=".5" stroke-dasharray=".8 .7"/><path d="M6.2 10.35L6.65 8.55L8.1 9.9Z" fill="#fff" opacity=".9"/></svg></td><td class="c"><svg width="8.8" height="16" viewBox="0 0 8.8 16" fill="none" preserveAspectRatio="none" style="margin-top:4px"><path d="M7.7 4.7C7.2 3.3 6 2.6 4.4 2.6C2.4 2.6 1.2 3.6 1.2 5.1C1.2 6.8 2.6 7.4 4.4 7.9C6.4 8.4 7.7 9.1 7.7 10.9C7.7 12.5 6.4 13.5 4.4 13.5C2.6 13.5 1.3 12.8 0.9 11.3" fill="none" stroke="#0f3468" stroke-width="2"/><path d="M4.4 0V2.8M4.4 13.2V16" stroke="#0f3468" stroke-width="1.8" fill="none"/></svg></td><td>3391</td><td>China Dragon Culture<br>Tourism Industry Group<br>Co. Ltd</td><td>Foreign</td><td>Local Company<br>limited by shares</td><td>Professional, Scientific<br>and Technical Activities</td><td>Kumul Highway, Port<br>Vila, Shefa Province,<br>Shefa</td><td>Nov 1,<br>2024</td><td class="c vf"><svg width="16.9" height="13.1" viewBox="0 0 16.9 13.1" fill="#0f3c74" preserveAspectRatio="none" style="margin-top:5px;color:#0f3c74;margin-left:.3px"><path d="M2.6 0.75A2.2 2.2 0 0 0 0.75 2.95V10.15A2.2 2.2 0 0 0 2.95 12.35H10.15A2.2 2.2 0 0 0 12.35 10.15V8.3" fill="none" stroke="currentColor" stroke-width="1.25"/><path d="M2.4 0.75H9.7" fill="none" stroke="currentColor" stroke-width="1.25" opacity=".62"/><path d="M5.4 11.2L5.9 7.95L14.3 0.45L16.9 3.35L8.5 10.85Z"/><path d="M12.6 1.95L15.2 4.85" stroke="#fff" stroke-width=".65" opacity=".8"/><path d="M8.3 8.4L12.6 4.55" stroke="#fff" stroke-width=".55" opacity=".5" stroke-dasharray=".8 .7"/><path d="M6.2 10.35L6.65 8.55L8.1 9.9Z" fill="#fff" opacity=".9"/></svg></td><td></td><td></td><td><div class="prog"><div style="width:24px;font-size:15px;text-align:left;text-indent:-.6px">16%</div></div></td><td class="c"><svg width="10.9" height="10.6" viewBox="0 0 18 18" fill="#ff0000" preserveAspectRatio="none" style="margin-top:7.6px"><path d="M4 0L9 5L14 0L18 4L13 9L18 14L14 18L9 13L4 18L0 14L5 9L0 4Z" stroke-linejoin="round"/></svg></td><td class="r">0</td></tr>
<tr class="s"><td><span class="cb"></span></td><td class="c"><svg width="16.9" height="13.1" viewBox="0 0 16.9 13.1" fill="#0f3c74" preserveAspectRatio="none" style="margin-top:5px;color:#0f3c74;margin-left:.3px"><path d="M2.6 0.75A2.2 2.2 0 0 0 0.75 2.95V10.15A2.2 2.2 0 0 0 2.95 12.35H10.15A2.2 2.2 0 0 0 12.35 10.15V8.3" fill="none" stroke="currentColor" stroke-width="1.25"/><path d="M2.4 0.75H9.7" fill="none" stroke="currentColor" stroke-width="1.25" opacity=".62"/><path d="M5.4 11.2L5.9 7.95L14.3 0.45L16.9 3.35L8.5 10.85Z"/><path d="M12.6 1.95L15.2 4.85" stroke="#fff" stroke-width=".65" opacity=".8"/><path d="M8.3 8.4L12.6 4.55" stroke="#fff" stroke-width=".55" opacity=".5" stroke-dasharray=".8 .7"/><path d="M6.2 10.35L6.65 8.55L8.1 9.9Z" fill="#fff" opacity=".9"/></svg></td><td class="c"><svg width="8.8" height="16" viewBox="0 0 8.8 16" fill="none" preserveAspectRatio="none" style="margin-top:4px"><path d="M7.7 4.7C7.2 3.3 6 2.6 4.4 2.6C2.4 2.6 1.2 3.6 1.2 5.1C1.2 6.8 2.6 7.4 4.4 7.9C6.4 8.4 7.7 9.1 7.7 10.9C7.7 12.5 6.4 13.5 4.4 13.5C2.6 13.5 1.3 12.8 0.9 11.3" fill="none" stroke="#0f3468" stroke-width="2"/><path d="M4.4 0V2.8M4.4 13.2V16" stroke="#0f3468" stroke-width="1.8" fill="none"/></svg></td><td>3395</td><td>Star Win International<br>Company Ltd</td><td>Foreign</td><td>Local Company<br>limited by shares</td><td>Professional, Scientific<br>and Technical Activities</td><td>Elluk Road, Port Vila,<br>Shefa Province,<br>Shefa</td><td>Oct 31,<br>2024</td><td class="c vf"><svg width="16.9" height="13.1" viewBox="0 0 16.9 13.1" fill="#0f3c74" preserveAspectRatio="none" style="margin-top:5px;color:#0f3c74;margin-left:.3px"><path d="M2.6 0.75A2.2 2.2 0 0 0 0.75 2.95V10.15A2.2 2.2 0 0 0 2.95 12.35H10.15A2.2 2.2 0 0 0 12.35 10.15V8.3" fill="none" stroke="currentColor" stroke-width="1.25"/><path d="M2.4 0.75H9.7" fill="none" stroke="currentColor" stroke-width="1.25" opacity=".62"/><path d="M5.4 11.2L5.9 7.95L14.3 0.45L16.9 3.35L8.5 10.85Z"/><path d="M12.6 1.95L15.2 4.85" stroke="#fff" stroke-width=".65" opacity=".8"/><path d="M8.3 8.4L12.6 4.55" stroke="#fff" stroke-width=".55" opacity=".5" stroke-dasharray=".8 .7"/><path d="M6.2 10.35L6.65 8.55L8.1 9.9Z" fill="#fff" opacity=".9"/></svg></td><td></td><td></td><td>Approved</td><td class="c"><svg width="14.5" height="11.1" viewBox="0 0 14.5 11.1" fill="#008000" preserveAspectRatio="none" style="margin-top:6.9px"><path d="M0 5.7L2.5 3.3L5.7 6.4L12.1 0L14.5 2.4L5.7 11.1Z"/></svg></td><td class="r">0</td></tr>
</table>
</body>
</html>
